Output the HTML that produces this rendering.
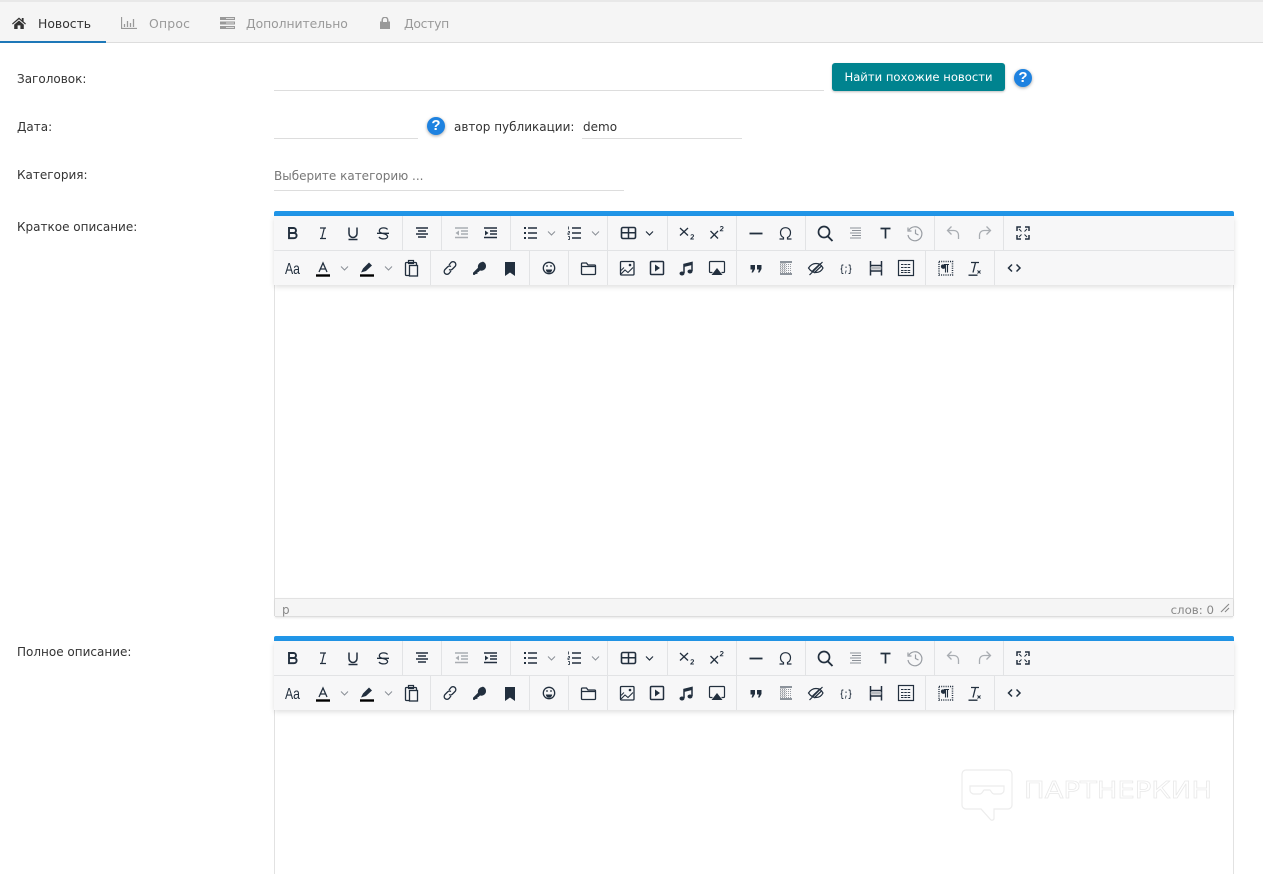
<!DOCTYPE html>
<html lang="ru"><head><meta charset="utf-8"><title>Новость</title>
<style>
html,body{margin:0;padding:0;background:#fff;width:1263px;height:874px;overflow:hidden}
body{position:relative;font-family:"DejaVu Sans","Liberation Sans",sans-serif;font-size:12px;color:#333}
.a{position:absolute;white-space:nowrap}
.tabs{left:0;top:0;width:1263px;background:#f5f5f5;border-top:2px solid #e8e8e8;border-bottom:1px solid #ddd;box-sizing:content-box;height:40px}
.tab{color:#999;top:16px;line-height:16px;font-size:12.4px}
.line{height:1px;background:#ddd}
.lab{left:17px;line-height:16px;font-size:12px;color:#333}
.btn{left:832px;top:63px;width:173px;height:28px;background:#00838f;border-radius:3px;color:#fff;text-align:center;line-height:29px;font-size:11.6px;box-shadow:0 1px 2px rgba(0,0,0,.25)}
.q{width:18px;height:18px;border-radius:50%;background:#1e82e0;color:#fff;font:bold 15px/18px "Liberation Sans",sans-serif;text-align:center;box-shadow:0 1px 3px rgba(0,0,0,.35)}
.ed{left:274px;width:958px;border:1px solid #e2e2e2;border-top:0;background:#fff}
.bar{left:274px;width:960px;height:5px;background:#2196e8;border-radius:2px 2px 0 0}
.tb{left:274px;width:960px;height:69px;background:#f7f7f8;box-shadow:0 2px 5px rgba(0,0,0,.13)}
.st{left:275px;width:958px;height:17px;top:598px;background:#f5f5f5;border-top:1px solid #e2e2e2;border-bottom:1px solid #ddd;box-shadow:0 1px 2px rgba(0,0,0,.1);font-size:12px;line-height:22px;color:#888}
svg{display:block}
</style></head><body>

<div class="a tabs"></div>
<div class="a" style="left:0;top:41px;width:106px;height:2px;background:#1e78b8"></div>
<svg class="a" style="left:12px;top:17px" width="14" height="12" viewBox="0 0 14 12"><path d="M7 .5 0 6.600l.8.900L7 2.200l6.200 5.300.8-.9-2.400-2.100V1h-1.800v2L7 .5zM2.200 7.600V12h3.400V8.400h2.800V12h3.400V7.600L7 3.500z" fill="#333"/></svg>
<div class="a tab" style="left:38px;color:#333">Новость</div>
<svg class="a" style="left:121px;top:17px" width="16" height="12" viewBox="0 0 16 12"><path d="M.5 0v11.500H16M3.500 7v3M6.500 4v6M9.500 6v4M12.500 2v8" fill="none" stroke="#999" stroke-width="1.300"/></svg>
<div class="a tab" style="left:149px;letter-spacing:.2px">Опрос</div>
<svg class="a" style="left:220px;top:17px" width="15" height="12" viewBox="0 0 15 12"><path d="M0 0h15v3H0zM0 4.500h15v3H0zM0 9h15v3H0z" fill="#999"/><path d="M6 1.500h8M6 6h8M6 10.500h8" stroke="#ddd" stroke-width="1"/></svg>
<div class="a tab" style="left:246px;letter-spacing:-.08px">Дополнительно</div>
<svg class="a" style="left:380px;top:17px" width="10" height="12" viewBox="0 0 10 12"><path d="M0 5h10v7H0zM2 5V3a3 3 0 0 1 6 0v2" fill="#999" stroke="#999" stroke-width="1"/><path d="M3 5V3a2 2 0 0 1 4 0v2z" fill="#f5f5f5"/></svg>
<div class="a tab" style="left:404px;letter-spacing:-.3px">Доступ</div>

<div class="a lab" style="top:71px">Заголовок:</div>
<div class="a line" style="left:274px;top:90px;width:550px"></div>
<div class="a btn">Найти похожие новости</div>
<div class="a q" style="left:1014px;top:69px">?</div>

<div class="a lab" style="top:119px">Дата:</div>
<div class="a line" style="left:274px;top:138px;width:144px"></div>
<div class="a q" style="left:427px;top:117px">?</div>
<div class="a" style="left:454px;top:119px;line-height:16px;font-size:12px">автор публикации:</div>
<div class="a" style="left:583px;top:119px;line-height:16px;font-size:12px">demo</div>
<div class="a line" style="left:582px;top:138px;width:160px"></div>

<div class="a lab" style="top:167px">Категория:</div>
<div class="a" style="left:274px;top:168px;line-height:16px;font-size:12px;color:#777">Выберите категорию ...</div>
<div class="a line" style="left:274px;top:190px;width:350px"></div>

<div class="a lab" style="top:219px">Краткое описание:</div>
<div class="a lab" style="top:644px">Полное описание:</div>

<svg width="0" height="0" style="position:absolute">
<symbol id="toolbar" viewBox="274 216 960 70">
<g stroke="#e2e3e5" stroke-width="1" fill="none">
<path d="M274 250.500H1234M402.500 216v34M441.500 216v34M510.500 216v34M607.500 216v34M667.500 216v34M736.500 216v34M805.500 216v34M934.500 216v34M1003.500 216v34M430.500 251v34M529.500 251v34M568.500 251v34M607.500 251v34M736.500 251v34M925.500 251v34M994.500 251v34"/>
</g>
<g fill="none" stroke="#222f3e" stroke-width="1.500">
<!-- B -->
<path d="M289 228h4.500a2.500 2.500 0 0 1 0 5H289zM289 233h5a2.600 2.600 0 0 1 0 5.200h-5z" stroke-width="1.900"/>
<!-- I -->
<path d="M320 228h6M320 238.500h6M324.300 228l-2.600 10.500" stroke-width="1.200"/>
<!-- U -->
<path d="M349 227.500v6a4 4 0 0 0 8 0v-6M348.500 239.500h9"/>
<!-- S -->
<path d="M387.500 229.500c-1-2-7-2.500-8 .5-.8 2.500 1.500 3 3.500 3.500 2.500.6 5 1.300 4.500 3.500-.7 2.500-7 2.500-8.500 0M377 233.300h12" stroke-width="1.300"/>
<!-- Align -->
<path d="M416 228h12M418 231h8M416 234h12M418 237h8" stroke-width="1.500"/>
<!-- outdent disabled -->
<g stroke="#a9adb2"><path d="M455 228h13M461 231h7M461 234h7M455 237.500h13"/><path d="M459 230.500v5l-3.500-2.500z" fill="#a9adb2" stroke="none"/></g>
<!-- indent -->
<path d="M484 228h13M490 231h7M490 234h7M484 237.500h13"/><path d="M485 230.500v5l3.500-2.500z" fill="#222f3e" stroke="none"/>
<!-- bullet -->
<path d="M528 228h9M528 233h9M528 238h9"/><path d="M524 228h2M524 233h2M524 238h2" stroke-width="2"/>
<path d="M548 231.500l3.500 3.500 3.500-3.500M592 231.500l3.500 3.500 3.500-3.500" stroke="#8b9097" stroke-width="1"/>
<!-- numlist -->
<path d="M572 228h9M572 233h9M572 238h9"/><path d="M568.500 226.500v3M568 231.500h1.500v1.500H568v1.500h1.500M568 236.500h1.500v3H568" stroke-width=".8"/>
<!-- table -->
<rect x="621.500" y="227.500" width="14" height="11" rx="1.500" stroke-width="1.600"/><path d="M621.500 232.800h14M628.500 228v10" stroke-width="1.500"/>
<path d="M646 231.500l3.500 3.500 3.500-3.500" stroke-width="1.200"/>
<!-- sub/sup -->
<path d="M680 228l8 7.500M688 228l-8 7.500M710.500 231l7.500 7.500M718 231l-7.500 7.500" stroke-width="1.300"/>
<path d="M690.800 235.500c.5-1.200 2.800-1 2.800.3 0 1.200-2.800 2.200-2.900 3.200h3.100M720.300 227.300c.5-1.200 2.800-1 2.800.3 0 1.200-2.800 2.200-2.900 3.200h3.100" stroke-width=".9"/>
<!-- hr -->
<path d="M749.500 233.500h13" stroke-width="1.800"/>
<!-- omega -->
<path d="M779.500 239h4v-1.500c-2-1-3-2.800-3-4.800 0-3 2-5 5-5s5 2 5 5c0 2-1 3.800-3 4.800v1.500h4" stroke-width="1.200"/>
<!-- search -->
<circle cx="824" cy="232" r="5.500" stroke-width="1.700"/><path d="M828 236.500l4.500 4.500" stroke-width="1.900"/>
<!-- lines disabled -->
<path d="M850 228h11M852 230.500h9M850 233h11M852 235.500h9M850 238h11" stroke="#8b9097" stroke-width="1"/>
<!-- T -->
<path d="M880.500 228.500h10M885.500 228.500v10" stroke-width="1.700"/>
<!-- history -->
<path d="M909 230a7 7 0 1 1-1 5M908 227.500v3.500h3.500M915.500 229.500v4l3 1.500" stroke="#999da3" stroke-width="1.200"/>
<!-- undo/redo -->
<path d="M951.500 226.500l-4 4 4 4M947.500 230.500h6.500a4.500 4.500 0 0 1 4.500 4.500v4M986.500 226.500l4 4-4 4M990.500 230.500h-6.500a4.500 4.500 0 0 0-4.500 4.500v4" stroke="#a9adb2" stroke-width="1.300"/>
<!-- fullscreen -->
<path d="M1017 231V227h4M1025 227h4v4M1017 235v4h4M1025 239h4v-4" stroke-width="1.500"/>
<path d="M1019 229l2.500 2.500M1027 229l-2.500 2.500M1019 237l2.500-2.500M1027 237l-2.500-2.500" stroke-width="1"/>

<!-- ROW 2 -->
<!-- font color -->
<path d="M316 275.500h14" stroke-width="2.400" stroke="#000"/><path d="M319 272l4-9 4 9M320.500 269h5" stroke-width="1.300"/>
<path d="M341 266.500l3.500 3.500 3.500-3.500M385 266.500l3.500 3.500 3.500-3.500" stroke="#8b9097" stroke-width="1"/>
<!-- highlight -->
<path d="M360 275.500h14" stroke-width="2.400" stroke="#000"/><path d="M361 272.500l2-4 6-6 3 3-6 5.500z" fill="#222f3e" stroke="none"/>
<!-- paste -->
<rect x="405.500" y="262.500" width="11" height="13" rx="1" stroke-width="1.300"/><rect x="409.500" y="265.500" width="8" height="10.500" fill="#f7f7f8" stroke-width="1.300"/><rect x="408.500" y="260.500" width="5" height="3" stroke-width="1.200"/>
<!-- link -->
<path d="M449 265l2-2.500a2.800 2.800 0 0 1 4 4l-2.500 2.500a2.800 2.800 0 0 1-3.500.5M451 271l-2 2.500a2.800 2.800 0 0 1-4-4l2.500-2.500a2.800 2.800 0 0 1 3.500-.5" stroke-width="1.300"/>
<!-- key -->
<path d="M482.500 261.500a4.700 4.700 0 0 1 2 8 4.700 4.700 0 0 1-4.500 1l-1.500 1.500-1 .2v1.500l-1.800.3-1.200 1-1.500-.2v-2l5-5a4.700 4.700 0 0 1 4.500-5.800z" fill="#222f3e" stroke="none"/>
<!-- bookmark -->
<path d="M505 262h10v14l-5-3.500-5 3.500z" fill="#222f3e" stroke="none"/>
<!-- smile -->
<circle cx="549" cy="268" r="5.700" stroke-width="1.300"/><path d="M545.800 269.500h6.400a3.200 3.200 0 0 1-6.400 0z" fill="#222f3e" stroke="none"/><circle cx="547" cy="266" r=".9" fill="#222f3e" stroke="none"/><circle cx="551" cy="266" r=".9" fill="#222f3e" stroke="none"/>
<!-- folder -->
<path d="M581.500 264a1 1 0 0 1 1-1h4l1.500 2h6.500a1 1 0 0 1 1 1v7.500a1 1 0 0 1-1 1h-12a1 1 0 0 1-1-1zM581.500 266.500h13.500" stroke-width="1.300"/>
<!-- image -->
<rect x="620.500" y="261.500" width="13.500" height="13.500" rx="1" stroke-width="1.300"/><path d="M621 274l4-4 3 2.500 5-5" stroke-width="1.100"/><circle cx="630" cy="265" r="1.300" fill="#222f3e" stroke="none"/><path d="M621 270.500l3-3" stroke-width="1"/>
<!-- video -->
<rect x="650.500" y="261.500" width="13" height="13" rx="1" stroke-width="1.500"/><path d="M655 264.500v7l5-3.500z" fill="#222f3e" stroke="none"/>
<!-- music -->
<path d="M684 273v-8.500l8-2V271" stroke-width="1.500"/><ellipse cx="682" cy="273.500" rx="2.500" ry="2" fill="#222f3e" stroke="none"/><ellipse cx="690" cy="271.500" rx="2.500" ry="2" fill="#222f3e" stroke="none"/><path d="M684 264.500l8-2v2.500l-8 2z" fill="#222f3e" stroke="none"/>
<!-- airplay -->
<path d="M712.500 272.500h-2a1 1 0 0 1-1-1v-9a1 1 0 0 1 1-1h13a1 1 0 0 1 1 1v9a1 1 0 0 1-1 1h-2" stroke-width="1.200"/><path d="M717 268l5.500 7h-11z" fill="#222f3e" stroke="none"/>
<!-- quote -->
<path d="M750.500 265h4.500v4l-2 3.500h-1.500l1-3h-2zM757 265h4.500v4l-2 3.500H758l1-3h-2z" fill="#222f3e" stroke="none"/>
<!-- block list -->
<path d="M780 262h12M780 274h12" stroke-width="1"/><path d="M780 264.500h12M780 266.500h12M780 268.500h12M780 270.500h12M780 272.500h12M781 263v10M783 263v10M785 263v10" stroke="#7a7f86" stroke-width=".8" stroke-dasharray="1 1"/>
<!-- eye off -->
<path d="M808.500 268c2-3 4.500-4.500 7.500-4.500s5.500 1.500 7 4.500c-1.500 3-4 4.500-7 4.500s-5.500-1.500-7.500-4.500zM809.500 275l13-13M812.500 271l8-7.500M814 273l8-7.500" stroke-width="1.200"/>
<!-- H/V -->
<path d="M870.500 261v14.500M881.500 261v14.500M870.500 265.500h11M870.500 271h11" stroke-width="1.500"/><path d="M870.500 268.300h11" stroke="#7a7f86" stroke-width="2.500" stroke-dasharray="1 1"/>
<!-- template -->
<rect x="898.500" y="260.500" width="15" height="15" stroke-width="1.200"/><path d="M901 264.500h10M901 267.500h10M901 270.500h10M901 272.500h10" stroke-width="1" stroke-dasharray="2.500 .8"/>
<!-- show blocks -->
<rect x="939" y="261.500" width="13.500" height="13.500" stroke-width="1.500" stroke-dasharray="1 1.200"/>
<path d="M944 264.500h5M947.500 264.500v8M945.500 264.500v8" stroke-width="1.100"/><path d="M942 264.500h4v4h-1.500a2 2 0 0 1-2.500-4z" fill="#222f3e" stroke="none"/>
<!-- clear format -->
<path d="M971 262.500h8M975.500 262.500l-2.500 10M968.500 275.200h9" stroke-width="1.300"/><path d="M977.500 270.500l3 3M980.500 270.500l-3 3" stroke-width="1"/>
<!-- code -->
<path d="M1012 264.500l-3.500 3.500 3.500 3.500M1016.500 264.500l3.500 3.500-3.500 3.500" stroke-width="1.500"/>
</g>
</symbol>
</svg>

<!-- editor 1 -->
<div class="a bar" style="top:211px"></div>
<div class="a ed" style="top:216px;height:399px"></div>
<div class="a tb" style="top:216px"><svg width="960" height="70"><use href="#toolbar"/><text x="11" y="58" font-family="Liberation Sans,sans-serif" font-size="16" fill="#222f3e" textLength="15" lengthAdjust="spacingAndGlyphs">Aa</text><text x="566" y="56" font-family="Liberation Mono,monospace" font-weight="bold" font-size="10" fill="#222f3e" textLength="12" lengthAdjust="spacingAndGlyphs">{;}</text></svg></div>
<div class="a st"><span class="a" style="left:7px;top:0">p</span><span class="a" style="right:19px;top:0;font-size:11.800px">слов: 0</span><svg class="a" style="right:3px;top:4px" width="10" height="10" viewBox="0 0 10 10"><path d="M1 9l8-8M5 9l4-4" stroke="#888" stroke-width="1.100"/></svg></div>

<!-- editor 2 -->
<div class="a bar" style="top:636px"></div>
<div class="a ed" style="top:641px;height:240px"></div>
<div class="a tb" style="top:641px"><svg width="960" height="70"><use href="#toolbar"/><text x="11" y="58" font-family="Liberation Sans,sans-serif" font-size="16" fill="#222f3e" textLength="15" lengthAdjust="spacingAndGlyphs">Aa</text><text x="566" y="56" font-family="Liberation Mono,monospace" font-weight="bold" font-size="10" fill="#222f3e" textLength="12" lengthAdjust="spacingAndGlyphs">{;}</text></svg></div>

<!-- watermark -->
<svg class="a" style="left:960px;top:767px" width="256" height="58" viewBox="960 767 256 58">
<g fill="none" stroke="#ececec" stroke-width="1.200">
<path d="M966 770h42a4 4 0 0 1 4 4v31a4 4 0 0 1-4 4h-14v9a2 2 0 0 1-3.500 1.500L981 809h-15a4 4 0 0 1-4-4v-31a4 4 0 0 1 4-4z"/>
<path d="M970 786h34v4a4 4 0 0 1-4 4h-6c-2 0-3-3-4-4h-6c-1 1-2 4-4 4h-6a4 4 0 0 1-4-4z"/>
</g>
<text x="1024" y="798" font-family="DejaVu Sans,sans-serif" font-size="23" fill="#fff" stroke="#e9e9e9" stroke-width=".7" textLength="188" lengthAdjust="spacingAndGlyphs">ПАРТНЕРКИН</text>
</svg>
</body></html>
